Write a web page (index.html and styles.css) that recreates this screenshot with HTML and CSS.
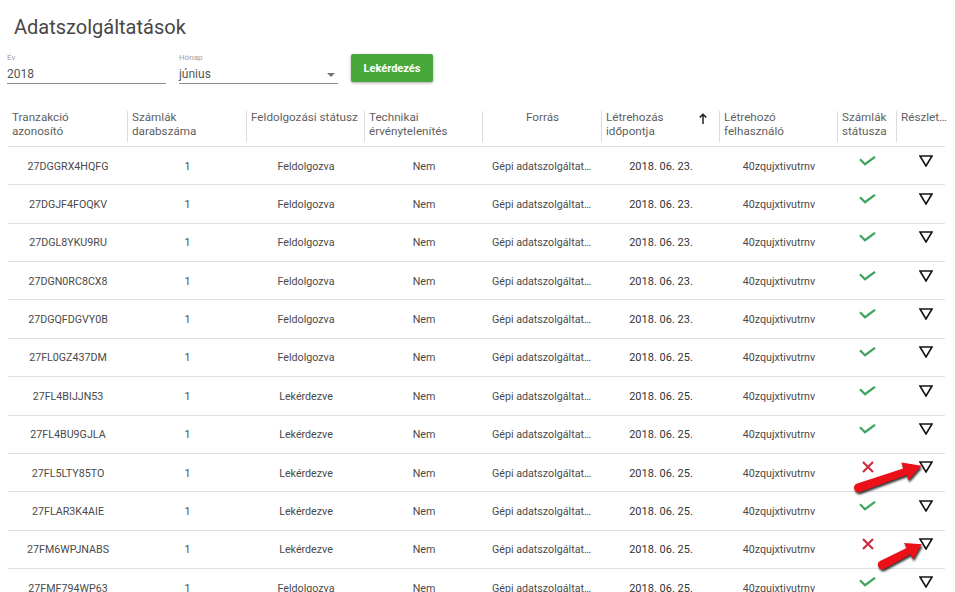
FILE: index.html
```html
<!DOCTYPE html>
<html lang="hu">
<head>
<meta charset="utf-8">
<title>Adatszolgáltatások</title>
<link rel="stylesheet" href="styles.css">
</head>
<body>
<h1 class="page-title">Adatszolgáltatások</h1>

<div class="filters">
  <div class="field">
    <div class="field-label">Év</div>
    <div class="field-value">2018</div>
  </div>
  <div class="field">
    <div class="field-label">Hónap</div>
    <div class="field-value field-select"><span>június</span><span class="caret"></span></div>
  </div>
  <button class="btn-query">Lekérdezés</button>
</div>

<div class="grid">
  <div class="thead">
    <div class="th">Tranzakció<br>azonosító</div>
    <div class="th">Számlák<br>darabszáma</div>
    <div class="th">Feldolgozási státusz</div>
    <div class="th">Technikai<br>érvénytelenítés</div>
    <div class="th th-center">Forrás</div>
    <div class="th th-sort"><span>Létrehozás<br>időpontja</span><svg class="sort-icon" width="8" height="11" viewBox="0 0 8 11"><path d="M4 1.2V11M0.8 4.4L4 1.2L7.2 4.4" fill="none" stroke="#222" stroke-width="1.5"/></svg></div>
    <div class="th">Létrehozó<br>felhasználó</div>
    <div class="th">Számlák<br>státusza</div>
    <div class="th th-last"><span class="th-trunc">Részletek</span></div>
  </div>

  <div class="tr"><div class="td">27DGGRX4HQFG</div><div class="td">1</div><div class="td">Feldolgozva</div><div class="td">Nem</div><div class="td td-trunc"><span>Gépi adatszolgáltatás</span></div><div class="td td-date">2018. 06. 23.</div><div class="td">40zqujxtivutrnv</div><div class="td td-icon"><span class="icon-box"><svg width="17" height="10" viewBox="0 0 17 10"><polyline points="1,3.2 6,8.2 16,0.8" fill="none" stroke="#3fa35e" stroke-width="2.2"/></svg></span></div><div class="td td-icon td-detail"><span class="icon-box"><svg width="14" height="12" viewBox="0 0 14 12"><polygon points="1,1 13,1 7,11" fill="none" stroke="#151515" stroke-width="1.6"/></svg></span></div></div>

  <div class="tr"><div class="td">27DGJF4FOQKV</div><div class="td">1</div><div class="td">Feldolgozva</div><div class="td">Nem</div><div class="td td-trunc"><span>Gépi adatszolgáltatás</span></div><div class="td td-date">2018. 06. 23.</div><div class="td">40zqujxtivutrnv</div><div class="td td-icon"><span class="icon-box"><svg width="17" height="10" viewBox="0 0 17 10"><polyline points="1,3.2 6,8.2 16,0.8" fill="none" stroke="#3fa35e" stroke-width="2.2"/></svg></span></div><div class="td td-icon td-detail"><span class="icon-box"><svg width="14" height="12" viewBox="0 0 14 12"><polygon points="1,1 13,1 7,11" fill="none" stroke="#151515" stroke-width="1.6"/></svg></span></div></div>

  <div class="tr"><div class="td">27DGL8YKU9RU</div><div class="td">1</div><div class="td">Feldolgozva</div><div class="td">Nem</div><div class="td td-trunc"><span>Gépi adatszolgáltatás</span></div><div class="td td-date">2018. 06. 23.</div><div class="td">40zqujxtivutrnv</div><div class="td td-icon"><span class="icon-box"><svg width="17" height="10" viewBox="0 0 17 10"><polyline points="1,3.2 6,8.2 16,0.8" fill="none" stroke="#3fa35e" stroke-width="2.2"/></svg></span></div><div class="td td-icon td-detail"><span class="icon-box"><svg width="14" height="12" viewBox="0 0 14 12"><polygon points="1,1 13,1 7,11" fill="none" stroke="#151515" stroke-width="1.6"/></svg></span></div></div>

  <div class="tr"><div class="td">27DGN0RC8CX8</div><div class="td">1</div><div class="td">Feldolgozva</div><div class="td">Nem</div><div class="td td-trunc"><span>Gépi adatszolgáltatás</span></div><div class="td td-date">2018. 06. 23.</div><div class="td">40zqujxtivutrnv</div><div class="td td-icon"><span class="icon-box"><svg width="17" height="10" viewBox="0 0 17 10"><polyline points="1,3.2 6,8.2 16,0.8" fill="none" stroke="#3fa35e" stroke-width="2.2"/></svg></span></div><div class="td td-icon td-detail"><span class="icon-box"><svg width="14" height="12" viewBox="0 0 14 12"><polygon points="1,1 13,1 7,11" fill="none" stroke="#151515" stroke-width="1.6"/></svg></span></div></div>

  <div class="tr"><div class="td">27DGQFDGVY0B</div><div class="td">1</div><div class="td">Feldolgozva</div><div class="td">Nem</div><div class="td td-trunc"><span>Gépi adatszolgáltatás</span></div><div class="td td-date">2018. 06. 23.</div><div class="td">40zqujxtivutrnv</div><div class="td td-icon"><span class="icon-box"><svg width="17" height="10" viewBox="0 0 17 10"><polyline points="1,3.2 6,8.2 16,0.8" fill="none" stroke="#3fa35e" stroke-width="2.2"/></svg></span></div><div class="td td-icon td-detail"><span class="icon-box"><svg width="14" height="12" viewBox="0 0 14 12"><polygon points="1,1 13,1 7,11" fill="none" stroke="#151515" stroke-width="1.6"/></svg></span></div></div>

  <div class="tr"><div class="td">27FL0GZ437DM</div><div class="td">1</div><div class="td">Feldolgozva</div><div class="td">Nem</div><div class="td td-trunc"><span>Gépi adatszolgáltatás</span></div><div class="td td-date">2018. 06. 25.</div><div class="td">40zqujxtivutrnv</div><div class="td td-icon"><span class="icon-box"><svg width="17" height="10" viewBox="0 0 17 10"><polyline points="1,3.2 6,8.2 16,0.8" fill="none" stroke="#3fa35e" stroke-width="2.2"/></svg></span></div><div class="td td-icon td-detail"><span class="icon-box"><svg width="14" height="12" viewBox="0 0 14 12"><polygon points="1,1 13,1 7,11" fill="none" stroke="#151515" stroke-width="1.6"/></svg></span></div></div>

  <div class="tr"><div class="td">27FL4BIJJN53</div><div class="td">1</div><div class="td">Lekérdezve</div><div class="td">Nem</div><div class="td td-trunc"><span>Gépi adatszolgáltatás</span></div><div class="td td-date">2018. 06. 25.</div><div class="td">40zqujxtivutrnv</div><div class="td td-icon"><span class="icon-box"><svg width="17" height="10" viewBox="0 0 17 10"><polyline points="1,3.2 6,8.2 16,0.8" fill="none" stroke="#3fa35e" stroke-width="2.2"/></svg></span></div><div class="td td-icon td-detail"><span class="icon-box"><svg width="14" height="12" viewBox="0 0 14 12"><polygon points="1,1 13,1 7,11" fill="none" stroke="#151515" stroke-width="1.6"/></svg></span></div></div>

  <div class="tr"><div class="td">27FL4BU9GJLA</div><div class="td">1</div><div class="td">Lekérdezve</div><div class="td">Nem</div><div class="td td-trunc"><span>Gépi adatszolgáltatás</span></div><div class="td td-date">2018. 06. 25.</div><div class="td">40zqujxtivutrnv</div><div class="td td-icon"><span class="icon-box"><svg width="17" height="10" viewBox="0 0 17 10"><polyline points="1,3.2 6,8.2 16,0.8" fill="none" stroke="#3fa35e" stroke-width="2.2"/></svg></span></div><div class="td td-icon td-detail"><span class="icon-box"><svg width="14" height="12" viewBox="0 0 14 12"><polygon points="1,1 13,1 7,11" fill="none" stroke="#151515" stroke-width="1.6"/></svg></span></div></div>

  <div class="tr"><div class="td">27FL5LTY85TO</div><div class="td">1</div><div class="td">Lekérdezve</div><div class="td">Nem</div><div class="td td-trunc"><span>Gépi adatszolgáltatás</span></div><div class="td td-date">2018. 06. 25.</div><div class="td">40zqujxtivutrnv</div><div class="td td-icon"><span class="icon-box"><svg width="12" height="12" viewBox="0 0 12 12"><path d="M1 1L11 11M11 1L1 11" fill="none" stroke="#cc2f3c" stroke-width="2.2"/></svg></span></div><div class="td td-icon td-detail"><span class="icon-box"><svg width="14" height="12" viewBox="0 0 14 12"><polygon points="1,1 13,1 7,11" fill="none" stroke="#151515" stroke-width="1.6"/></svg></span></div></div>

  <div class="tr"><div class="td">27FLAR3K4AIE</div><div class="td">1</div><div class="td">Lekérdezve</div><div class="td">Nem</div><div class="td td-trunc"><span>Gépi adatszolgáltatás</span></div><div class="td td-date">2018. 06. 25.</div><div class="td">40zqujxtivutrnv</div><div class="td td-icon"><span class="icon-box"><svg width="17" height="10" viewBox="0 0 17 10"><polyline points="1,3.2 6,8.2 16,0.8" fill="none" stroke="#3fa35e" stroke-width="2.2"/></svg></span></div><div class="td td-icon td-detail"><span class="icon-box"><svg width="14" height="12" viewBox="0 0 14 12"><polygon points="1,1 13,1 7,11" fill="none" stroke="#151515" stroke-width="1.6"/></svg></span></div></div>

  <div class="tr"><div class="td">27FM6WPJNABS</div><div class="td">1</div><div class="td">Lekérdezve</div><div class="td">Nem</div><div class="td td-trunc"><span>Gépi adatszolgáltatás</span></div><div class="td td-date">2018. 06. 25.</div><div class="td">40zqujxtivutrnv</div><div class="td td-icon"><span class="icon-box"><svg width="12" height="12" viewBox="0 0 12 12"><path d="M1 1L11 11M11 1L1 11" fill="none" stroke="#cc2f3c" stroke-width="2.2"/></svg></span></div><div class="td td-icon td-detail"><span class="icon-box"><svg width="14" height="12" viewBox="0 0 14 12"><polygon points="1,1 13,1 7,11" fill="none" stroke="#151515" stroke-width="1.6"/></svg></span></div></div>

  <div class="tr"><div class="td">27FMF794WP63</div><div class="td">1</div><div class="td">Feldolgozva</div><div class="td">Nem</div><div class="td td-trunc"><span>Gépi adatszolgáltatás</span></div><div class="td td-date">2018. 06. 25.</div><div class="td">40zqujxtivutrnv</div><div class="td td-icon"><span class="icon-box"><svg width="17" height="10" viewBox="0 0 17 10"><polyline points="1,3.2 6,8.2 16,0.8" fill="none" stroke="#3fa35e" stroke-width="2.2"/></svg></span></div><div class="td td-icon td-detail"><span class="icon-box"><svg width="14" height="12" viewBox="0 0 14 12"><polygon points="1,1 13,1 7,11" fill="none" stroke="#151515" stroke-width="1.6"/></svg></span></div></div>
</div>

<svg class="annotations" width="955" height="592" viewBox="0 0 955 592">
  <path class="anno-arrow" d="M856.5 483.8 L903.2 468.4 L901.4 462.6 L921.5 465.8 L908.4 480.6 L906.6 475.0 L859.5 492.2 A4.5 4.5 0 0 1 856.5 483.8 Z"/>
  <path class="anno-arrow" d="M880.0 561.0 L906.6 548.0 L904.0 543.0 L921.8 544.3 L913.0 559.5 L910.4 554.5 L884.0 569.0 A4.5 4.5 0 0 1 880.0 561.0 Z"/>
</svg>
</body>
</html>
```
FILE: styles.css
```css
* { box-sizing: border-box; }

html, body {
  margin: 0;
  height: 592px;
  overflow: hidden;
  background: #fff;
}

body {
  position: relative;
  font-family: Roboto, "Noto Sans", "Liberation Sans", sans-serif;
  color: #444;
}

.page-title {
  margin: 15px 0 0 14px;
  font-size: 20px;
  line-height: 24px;
  font-weight: 400;
  color: #474747;
}

.filters {
  display: flex;
  align-items: flex-start;
  gap: 13px;
  margin-top: 14px;
  padding-left: 7px;
}

.field { width: 159px; }

.field-label {
  font-size: 8px;
  line-height: 10px;
  color: #9e9e9e;
}

.field-value {
  margin-top: 3px;
  height: 18px;
  font-size: 12px;
  line-height: 16px;
  color: #555;
  border-bottom: 1px solid #8c8c8c;
}

.field-select {
  display: flex;
  justify-content: space-between;
  align-items: center;
  padding-right: 3px;
  padding-bottom: 1px;
}

.caret {
  width: 0;
  height: 0;
  border-left: 4px solid transparent;
  border-right: 4px solid transparent;
  border-top: 4px solid #757575;
  margin-top: 1px;
}

.btn-query {
  margin-top: 1px;
  width: 82px;
  height: 28px;
  border: none;
  border-radius: 2px;
  background: #46a93a;
  color: #fff;
  font-family: Roboto, "Noto Sans", sans-serif;
  font-size: 11px;
  font-weight: 700;
  box-shadow: 0 1px 3px rgba(0, 0, 0, 0.35);
  padding: 0;
}

.grid {
  margin: 22px 0 0 8px;
  width: 937px;
}

.thead, .tr {
  display: grid;
  grid-template-columns: 120px 119px 118px 118px 119px 118px 118px 59px 48px;
}

.thead {
  height: 41px;
  border-bottom: 1px solid #e0e0e0;
}

.th {
  position: relative;
  padding: 5px 4px 0;
  font-size: 11.7px;
  line-height: 13.5px;
  color: #5f5f5f;
  white-space: nowrap;
  min-width: 0;
}

.th::after {
  content: "";
  position: absolute;
  right: 0;
  top: 5px;
  bottom: 4px;
  width: 1px;
  background: #dcdcdc;
}

.th-last::after { display: none; }

.th-center { text-align: center; }

.th-sort {
  display: flex;
  justify-content: space-between;
  align-items: flex-start;
  padding-right: 13px;
}

.sort-icon { margin-top: 2px; }

.th-trunc {
  display: block;
  width: 48px;
  overflow: hidden;
  text-overflow: ellipsis;
}

.tr {
  height: 38.36px;
  border-bottom: 1px solid #e0e0e0;
}

.td {
  display: flex;
  align-items: center;
  justify-content: center;
  min-width: 0;
  padding-top: 1px;
  font-size: 10.7px;
  color: #4a4a4a;
  white-space: nowrap;
}

.td-trunc { padding: 1px 8px 0 9px; }

.td-trunc span {
  overflow: hidden;
  text-overflow: ellipsis;
}

.td-date {
  font-size: 11px;
  color: #333;
}

.td-icon {
  align-items: flex-start;
  padding-top: 0;
}

.td-detail {
  justify-content: flex-start;
  padding-left: 22px;
}

.icon-box {
  height: 27px;
  display: flex;
  align-items: center;
}

.annotations {
  position: absolute;
  left: 0;
  top: 0;
  pointer-events: none;
}

.anno-arrow {
  fill: #ec1018;
  filter: drop-shadow(1px 2px 1.3px rgba(0, 0, 0, 0.8));
}
```
